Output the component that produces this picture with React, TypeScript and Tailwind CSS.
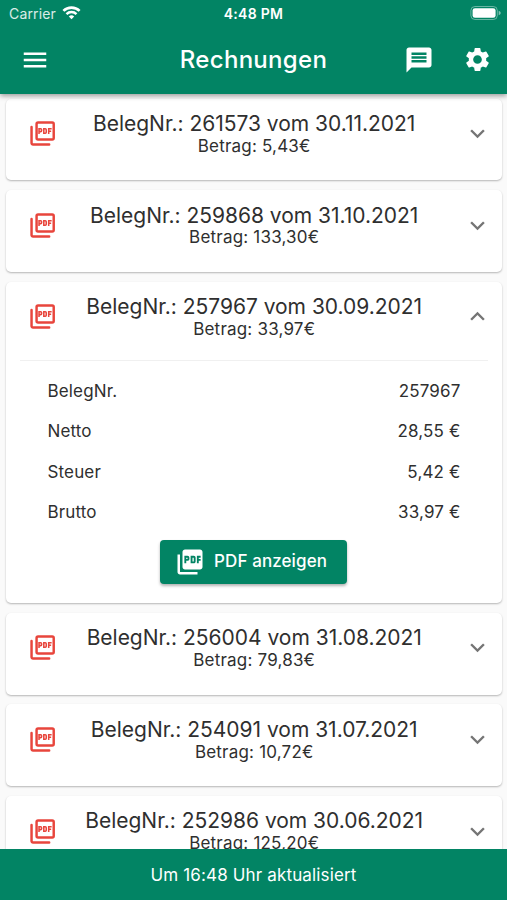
import { useState } from "react";
import {
  MdExpandLess,
  MdExpandMore,
  MdMenu,
  MdMessage,
  MdSettings,
} from "react-icons/md";

type Invoice = {
  id: string;
  date: string;
  total: string;
  net?: string;
  tax?: string;
};

const invoices: Invoice[] = [
  { id: "261573", date: "30.11.2021", total: "5,43" },
  { id: "259868", date: "31.10.2021", total: "133,30" },
  { id: "257967", date: "30.09.2021", total: "33,97", net: "28,55", tax: "5,42" },
  { id: "256004", date: "31.08.2021", total: "79,83" },
  { id: "254091", date: "31.07.2021", total: "10,72" },
  { id: "252986", date: "30.06.2021", total: "125,20" },
];

function PdfOutlineIcon({ className }: { className?: string }) {
  return (
    <svg viewBox="0 0 24 24" className={className} fill="none" stroke="currentColor">
      <rect x="7" y="2.8" width="14" height="14" rx="1.2" strokeWidth="2" />
      <path d="M2.9 6.6v13.1a1.2 1.2 0 0 0 1.2 1.2h13.2" strokeWidth="2" strokeLinecap="round" />
      <g strokeWidth="1.25">
        <path d="M9 12.2V7.9h1.3c.5 0 .8.3.8.8v.8c0 .5-.3.8-.8.8H9" />
        <path d="M12.9 7.9h1.2c.5 0 .8.3.8.8v2.1c0 .5-.3.8-.8.8h-1.2Z" />
        <path d="M16.9 12.2V7.9h2.4M16.9 10h2" />
      </g>
    </svg>
  );
}

function PdfIcon({ className }: { className?: string }) {
  return (
    <svg viewBox="0 0 24 24" className={className} fill="currentColor">
      <path d="M20 2H8c-1.1 0-2 .9-2 2v12c0 1.1.9 2 2 2h12c1.1 0 2-.9 2-2V4c0-1.1-.9-2-2-2zm-8.5 7.5c0 .83-.67 1.5-1.5 1.5H9v2H7.5V7H10c.83 0 1.5.67 1.5 1.5v1zm5 2c0 .83-.67 1.5-1.5 1.5h-2.5V7H15c.83 0 1.5.67 1.5 1.5v3zm4-3H19v1h1.5V11H19v2h-1.5V7h3v1.5zM9 9.5h1v-1H9v1zM4 6H2v14c0 1.1.9 2 2 2h14v-2H4V6zm10 5.5h1v-3h-1v3z" />
    </svg>
  );
}

function StatusBar() {
  return (
    <div className="grid h-[27px] grid-cols-3 items-center pr-[6px] pl-[9px] text-[14px]">
      <div className="flex items-center gap-[6px]">
        <span className="tracking-[0.15px] text-white/85">Carrier</span>
        <svg className="-mt-px h-[14px] w-[19px]" viewBox="0 0 19 14" fill="none">
          <path d="M1.4 4.9a11.6 11.6 0 0 1 16.2 0" stroke="white" strokeWidth="2.7" />
          <path d="M4.5 8.1a7.2 7.2 0 0 1 10 0" stroke="white" strokeWidth="2.5" />
          <path d="M9.5 13.2 6.8 10.5a3.9 3.9 0 0 1 5.4 0Z" fill="white" />
        </svg>
      </div>
      <span className="pr-[3px] text-center text-[14px] font-semibold tracking-[0.3px]">
        4:48 PM
      </span>
      <div className="flex justify-end pb-px">
        <svg className="h-[14px] w-[31px]" viewBox="0 0 31 14" fill="none">
          <rect x="0.9" y="0.5" width="26.4" height="13" rx="4" stroke="white" strokeOpacity="0.4" />
          <rect x="2.6" y="2.2" width="23" height="9.6" rx="2.4" fill="white" />
          <path d="M28.7 4.8c1.4.5 2 1.2 2 2.2s-.6 1.7-2 2.2Z" fill="white" fillOpacity="0.5" />
        </svg>
      </div>
    </div>
  );
}

function Header() {
  return (
    <header className="z-10 h-[94px] shrink-0 bg-[#028464] text-white shadow-[0_2px_5px_rgba(0,0,0,0.38)]">
      <StatusBar />
      <div className="grid h-[66px] grid-cols-[1fr_auto_1fr] items-center pr-[15px] pl-5">
        <button aria-label="Menü" className="w-fit">
          <MdMenu size={30} />
        </button>
        <h1 className="pr-[5px] text-[24px] font-medium tracking-[0.3px]">Rechnungen</h1>
        <div className="flex items-center justify-end gap-[29px]">
          <button aria-label="Nachrichten" className="-mt-px">
            <MdMessage size={30} />
          </button>
          <button aria-label="Einstellungen" className="-mt-px">
            <MdSettings size={29} />
          </button>
        </div>
      </div>
    </header>
  );
}

function DetailRow({ label, value }: { label: string; value: string }) {
  return (
    <div className="flex h-[40.3px] items-center justify-between">
      <span>{label}</span>
      <span>{value}</span>
    </div>
  );
}

function InvoiceDetails({ invoice }: { invoice: Invoice }) {
  return (
    <div className="mx-[14px] h-[242.5px] border-t border-[#f0f0f0] pt-[10.1px]">
      <div className="pr-[27px] pl-[28px] text-[17px] tracking-[0.15px]">
        <DetailRow label="BelegNr." value={invoice.id} />
        <DetailRow label="Netto" value={`${invoice.net ?? "-"} €`} />
        <DetailRow label="Steuer" value={`${invoice.tax ?? "-"} €`} />
        <DetailRow label="Brutto" value={`${invoice.total} €`} />
      </div>
      <button className="mx-auto mt-[7.3px] flex h-[44px] w-[187px] items-center gap-[9px] rounded-[4px] bg-[#028464] pl-[15px] text-[17px] font-medium tracking-[0.1px] text-white shadow-[0_2px_3px_rgba(0,0,0,0.3)]">
        <PdfIcon className="size-[30px]" />
        PDF anzeigen
      </button>
    </div>
  );
}

type CardProps = {
  invoice: Invoice;
  open: boolean;
  onToggle: () => void;
};

function InvoiceCard({ invoice, open, onToggle }: CardProps) {
  const Chevron = open ? MdExpandLess : MdExpandMore;

  return (
    <section className="shrink-0 rounded-[5px] bg-white shadow-[0_1px_2px_rgba(0,0,0,0.28)]">
      <button
        onClick={onToggle}
        className={`flex w-full items-start pr-[10px] pl-[22px] ${open ? "h-[78.7px]" : "h-[81.8px]"}`}
      >
        <PdfOutlineIcon className="mt-[20.6px] size-[29.4px] shrink-0 text-[#e8453c]" />
        <span className="flex flex-1 flex-col items-center pt-[12.4px] pr-[11px]">
          <span className="text-[21px] leading-[25px] tracking-[-0.02px] whitespace-nowrap">
            BelegNr.: {invoice.id} vom {invoice.date}
          </span>
          <span className="-mt-[0.2px] text-[17px] leading-[20px] tracking-[0.2px]">
            Betrag: {invoice.total}€
          </span>
        </span>
        <Chevron size={29} className="mt-[20.6px] shrink-0 text-[#757575]" />
      </button>
      {open && <InvoiceDetails invoice={invoice} />}
    </section>
  );
}

export default function App() {
  const [openId, setOpenId] = useState<string | null>("257967");

  return (
    <div className="flex h-screen flex-col overflow-hidden bg-[#fafafa] font-[Inter,'Liberation_Sans',sans-serif] text-[#2f2f2f]">
      <Header />
      <main className="flex min-h-0 flex-1 flex-col gap-[9.8px] overflow-hidden px-[5.5px] pt-[4.6px]">
        {invoices.map((invoice) => (
          <InvoiceCard
            key={invoice.id}
            invoice={invoice}
            open={openId === invoice.id}
            onToggle={() => setOpenId(openId === invoice.id ? null : invoice.id)}
          />
        ))}
      </main>
      <footer className="z-10 flex h-[51px] shrink-0 items-center justify-center bg-[#028464] pt-[2px] text-[17px] tracking-[0.15px] text-white">
        Um 16:48 Uhr aktualisiert
      </footer>
    </div>
  );
}
